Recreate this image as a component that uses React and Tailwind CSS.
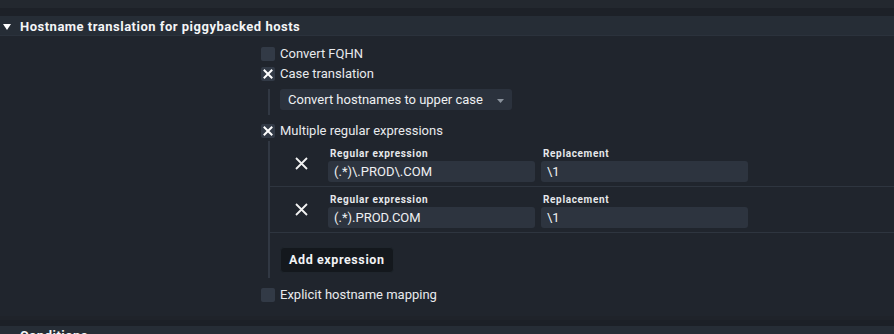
import React from "react";

function Check({ checked }) {
  return (
    <span className="w-[14px] h-[14px] rounded-[2px] bg-[#323a46] flex items-center justify-center shrink-0">
      {checked && (
        <svg width="10" height="10" viewBox="0 0 10 10">
          <path d="M1.5 1.5 L8.5 8.5 M8.5 1.5 L1.5 8.5" stroke="#ffffff" strokeWidth="2" strokeLinecap="square" />
        </svg>
      )}
    </span>
  );
}

function CheckRow({ checked, label }) {
  return (
    <div className="h-[20px] flex items-center gap-[5px]">
      <Check checked={checked} />
      <span className="text-[13px] text-[#e8eaed]">{label}</span>
    </div>
  );
}

function RegexRow({ expr }) {
  return (
    <div className="flex items-start h-[46px] border-b border-[#2e353f]">
      <div className="w-[58px] h-full flex items-center justify-center pl-[4px]">
        <svg width="13" height="13" viewBox="0 0 13 13">
          <path d="M1 1 L12 12 M12 1 L1 12" stroke="#f2f2f2" strokeWidth="1.8" />
        </svg>
      </div>
      <div className="flex gap-[6px] pt-[7px]">
        <div className="flex flex-col">
          <span className="text-[10px] font-bold tracking-[0.65px] text-[#e6e8eb] leading-[12px] pl-[2px]">Regular expression</span>
          <div className="mt-[1px] w-[207px] h-[21px] rounded-[3px] bg-[#2d343f] flex items-center pl-[6px] text-[13px] text-[#eef0f2]">{expr}</div>
        </div>
        <div className="flex flex-col">
          <span className="text-[10px] font-bold tracking-[0.65px] text-[#e6e8eb] leading-[12px] pl-[2px]">Replacement</span>
          <div className="mt-[1px] w-[207px] h-[21px] rounded-[3px] bg-[#2d343f] flex items-center pl-[6px] text-[13px] text-[#eef0f2]">\1</div>
        </div>
      </div>
    </div>
  );
}

export default function App() {
  return (
    <div className="w-[894px] h-[334px] overflow-hidden bg-[#20252d] flex flex-col" style={{ fontFamily: "Roboto, 'Liberation Sans', sans-serif" }}>
      <div className="h-[8px] bg-[#23282f] shrink-0" />
      <div className="h-[8px] bg-[#1d2128] shrink-0" />
      <div className="h-[20px] bg-[#262d36] flex items-center pt-[2px] shrink-0 border-b border-[#2b323c]">
        <svg width="8" height="6" viewBox="0 0 8 6" className="ml-[3px] mt-[1px]">
          <path d="M0 0 L8 0 L4 6 Z" fill="#ffffff" />
        </svg>
        <span className="ml-[9px] text-[13px] font-bold tracking-[0.5px] text-[#f4f5f7]">Hostname translation for piggybacked hosts</span>
      </div>
      <div className="flex-1 pl-[261px] pt-[8px] flex flex-col">
        <CheckRow label="Convert FQHN" />
        <CheckRow checked label="Case translation" />
        <div className="ml-[7px] mt-[5px] border-l-2 border-[#313843] pl-[10px] h-[26px]">
          <div className="w-[232px] h-[21px] rounded-[3px] bg-[#2b323d] flex items-center justify-between pl-[8px] pr-[8px]">
            <span className="text-[13px] text-[#eef0f2]">Convert hostnames to upper case</span>
            <svg width="7" height="4" viewBox="0 0 7 4" className="mt-[3px]">
              <path d="M0 0 L7 0 L3.5 4 Z" fill="#8a929c" />
            </svg>
          </div>
        </div>
        <div className="mt-[6px]">
          <CheckRow checked label="Multiple regular expressions" />
        </div>
        <div className="ml-[7px] border-l-2 border-[#313843] flex flex-col h-[137px]">
          <RegexRow expr="(.*)\.PROD\.COM" />
          <RegexRow expr="(.*).PROD.COM" />
          <div className="pl-[10px] mt-[14px]">
            <button className="h-[26px] px-[8px] rounded-[4px] bg-[#14181d] border border-[#1f252c] text-[12.5px] font-bold tracking-[0.6px] text-[#f2f3f5]">Add expression</button>
          </div>
        </div>
        <div className="mt-[7px]">
          <CheckRow label="Explicit hostname mapping" />
        </div>
      </div>
      <div className="h-[4px] bg-[#1f232a] shrink-0" />
      <div className="h-[6px] bg-[#1c2027] shrink-0" />
      <div className="h-[8px] bg-[#262d36] shrink-0 overflow-visible relative">
        <span className="absolute left-[20px] top-[2px] text-[13px] font-bold tracking-[0.5px] text-[#f4f5f7] leading-[16px]">Conditions</span>
      </div>
    </div>
  );
}
